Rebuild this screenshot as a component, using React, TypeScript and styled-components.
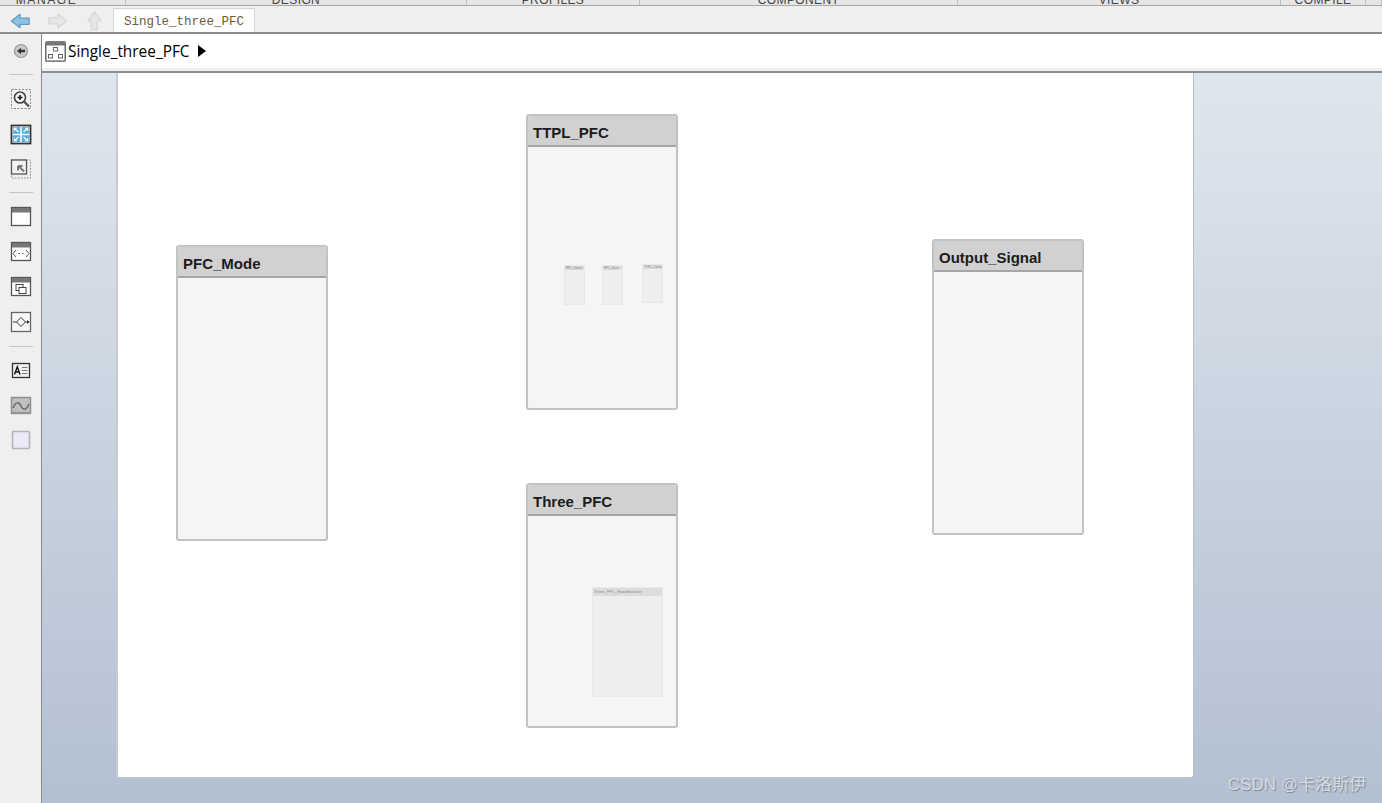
import React from 'react';
import styled, { createGlobalStyle } from 'styled-components';

const GlobalStyle = createGlobalStyle`
  html, body {
    margin: 0;
    padding: 0;
    height: 100%;
    overflow: hidden;
    font-family: "Liberation Sans", Arial, sans-serif;
  }
  #root {
    height: 100%;
  }
`;

const Window = styled.div`
  position: relative;
  display: flex;
  flex-direction: column;
  width: 1382px;
  height: 803px;
  overflow: hidden;
  background: #efefef;
`;

const Ribbon = styled.div`
  display: flex;
  flex: none;
  height: 5px;
  background: #e6e6e6;
  border-bottom: 1px solid #a8a8a8;
  overflow: hidden;
`;

const RibbonSection = styled.div<{ $width: number; $shift?: number; $track?: number }>`
  flex: none;
  box-sizing: border-box;
  width: ${({ $width }) => $width}px;
  height: 5px;
  padding-right: ${({ $shift }) => $shift ?? 0}px;
  border-right: 1px solid #bdbdbd;
  color: #444;
  font-size: 12px;
  line-height: 1px;
  letter-spacing: ${({ $track }) => $track ?? 0.4}px;
  text-align: center;
  overflow: hidden;
`;

const TabBar = styled.div`
  display: flex;
  align-items: flex-end;
  flex: none;
  height: 26px;
  background: #efefef;
  border-bottom: 2px solid #8b8b8b;
`;

const NavButtons = styled.div`
  display: flex;
  align-items: center;
  gap: 16px;
  width: 113px;
  height: 26px;
  padding: 4px 0 0 10px;
  box-sizing: border-box;
`;

const Tab = styled.div`
  box-sizing: border-box;
  width: 142px;
  height: 24px;
  background: #fff;
  border: 1px solid #d4d4d4;
  border-bottom: none;
  color: #6d5a3a;
  font-family: "Liberation Mono", monospace;
  font-size: 12.5px;
  line-height: 26px;
  text-align: center;
`;

const Body = styled.div`
  display: flex;
  flex: 1;
  min-height: 0;
`;

const Palette = styled.div`
  display: flex;
  flex-direction: column;
  align-items: center;
  flex: none;
  box-sizing: border-box;
  width: 42px;
  padding-top: 5px;
  background: #efefef;
  border-right: 1px solid #8b8b8b;
`;

const PaletteSlot = styled.div<{ $gap?: number }>`
  display: flex;
  align-items: center;
  justify-content: center;
  width: 24px;
  height: 24px;
  margin-bottom: ${({ $gap }) => $gap ?? 11}px;
`;

const PaletteDivider = styled.div`
  width: 24px;
  height: 1px;
  margin-bottom: 12px;
  background: #c4c4c4;
`;

const Main = styled.div`
  display: flex;
  flex-direction: column;
  flex: 1;
  min-width: 0;
`;

const Breadcrumb = styled.div`
  display: flex;
  align-items: center;
  flex: none;
  gap: 2px;
  box-sizing: border-box;
  height: 37px;
  padding-left: 3px;
  background: #fff;
  border-bottom: 3px solid #efefef;
`;

const CrumbLabel = styled.span`
  color: #000;
  font-family: "Open Sans", "Noto Sans", sans-serif;
  font-size: 15.4px;
`;

const CrumbArrow = styled.span`
  width: 0;
  height: 0;
  margin-left: 6px;
  border-left: 8px solid #000;
  border-top: 6px solid transparent;
  border-bottom: 6px solid transparent;
`;

const CanvasRule = styled.div`
  flex: none;
  height: 2px;
  background: #8a8e98;
`;

const Canvas = styled.div`
  flex: 1;
  min-height: 0;
  padding-left: 74px;
  background: linear-gradient(#dfe6ed, #b3c0d2);
  overflow: hidden;
`;

const Page = styled.div`
  position: relative;
  box-sizing: border-box;
  width: 1078px;
  height: 705px;
  background: #fff;
  border-left: 2px solid #c8ccd2;
  border-right: 1px solid #bcc1c8;
  border-bottom: 1px solid #bcc1c8;
  border-radius: 0 0 3px 3px;
`;

const Block = styled.div<{ $x: number; $y: number; $h: number }>`
  position: absolute;
  left: ${({ $x }) => $x}px;
  top: ${({ $y }) => $y}px;
  box-sizing: border-box;
  width: 152px;
  height: ${({ $h }) => $h}px;
  background: #f5f5f5;
  border: 2px solid #c2c2c2;
  border-radius: 3px;
`;

const BlockTitle = styled.div`
  box-sizing: border-box;
  height: 31px;
  padding: 8px 0 0 5px;
  background: #d1d1d1;
  border-bottom: 2px solid #a6a6a6;
  border-radius: 2px 2px 0 0;
  color: #1c1c1c;
  font-size: 15px;
  font-weight: 700;
  line-height: 17px;
`;

const MiniBlock = styled.div<{ $x: number; $y: number; $w: number; $h: number }>`
  position: absolute;
  left: ${({ $x }) => $x}px;
  top: ${({ $y }) => $y}px;
  box-sizing: border-box;
  width: ${({ $w }) => $w}px;
  height: ${({ $h }) => $h}px;
  background: #eeeeee;
  border: 1px solid #e9e9e9;
`;

const MiniTitle = styled.div<{ $h: number; $size: number }>`
  height: ${({ $h }) => $h}px;
  padding-left: 1px;
  background: #dcdcdc;
  color: #888;
  font-size: ${({ $size }) => $size}px;
  line-height: ${({ $h }) => $h}px;
  white-space: nowrap;
  overflow: hidden;
`;

const Watermark = styled.div`
  position: absolute;
  right: 16px;
  bottom: 8px;
  color: #d6dbe2;
  font-family: "Liberation Sans", "Noto Sans CJK SC", sans-serif;
  font-size: 17px;
  line-height: 20px;
  text-shadow: 1px 1px 1px #7d8794;
`;

const ribbonSections = [
  { label: 'MANAGE', width: 126, shift: 32, track: 1.6 },
  { label: 'DESIGN', width: 341 },
  { label: 'PROFILES', width: 173 },
  { label: 'COMPONENT', width: 318 },
  { label: 'VIEWS', width: 323 },
  { label: 'COMPILE', width: 85 },
  { label: '', width: 16 },
];

const NavArrow: React.FC<{ rotate?: number; active?: boolean }> = ({ rotate = 0, active }) => (
  <svg width="21" height="20" viewBox="0 0 22 20">
    <path
      d="M1.5 10 L10.5 3 V7 H20 V13.5 H10.5 V17 Z"
      fill={active ? '#8fc0e6' : '#e6e6e6'}
      stroke={active ? '#5b9ac9' : '#d6d6d6'}
      strokeWidth="1.3"
      strokeLinejoin="round"
      transform={`rotate(${rotate} 11 10)`}
    />
  </svg>
);

const Icon: React.FC<{ children: React.ReactNode }> = ({ children }) => (
  <svg width="22" height="22" viewBox="0 0 22 22" fill="none">
    {children}
  </svg>
);

const FrameIcon: React.FC<{ children?: React.ReactNode }> = ({ children }) => (
  <Icon>
    <rect x="1.5" y="1.5" width="19" height="18" fill="#fff" stroke="#555" strokeWidth="1.3" />
    <rect x="2" y="2" width="18" height="4.5" fill="#777" />
    {children}
  </Icon>
);

function App() {
  return (
    <Window>
      <GlobalStyle />
      <Ribbon>
        {ribbonSections.map((section, i) => (
          <RibbonSection key={i} $width={section.width} $shift={section.shift} $track={section.track}>
            {section.label}
          </RibbonSection>
        ))}
      </Ribbon>

      <TabBar>
        <NavButtons>
          <NavArrow active />
          <NavArrow rotate={180} />
          <NavArrow rotate={90} />
        </NavButtons>
        <Tab>Single_three_PFC</Tab>
      </TabBar>

      <Body>
        <Palette>
          <PaletteSlot $gap={11}>
            <svg width="18" height="18" viewBox="0 0 18 18">
              <circle cx="9" cy="9" r="6.5" fill="#c9c9c9" stroke="#999" strokeWidth="1.2" />
              <path d="M5 9 L9 5.8 V7.8 H13 V10.2 H9 V12.2 Z" fill="#333" />
            </svg>
          </PaletteSlot>
          <PaletteDivider />
          <PaletteSlot $gap={12}>
            <Icon>
              <rect x="1.5" y="1.5" width="19" height="19" stroke="#888" strokeDasharray="2 1.5" fill="#f2f2f2" />
              <circle cx="10" cy="9.5" r="5.5" fill="#f6f6f6" stroke="#444" strokeWidth="1.6" />
              <path d="M7.5 9.5 H12.5 M10 7 V12" stroke="#111" strokeWidth="1.5" />
              <path d="M14 13.5 L19 18.5" stroke="#555" strokeWidth="2.4" />
            </Icon>
          </PaletteSlot>
          <PaletteSlot $gap={10}>
            <Icon>
              <rect x="1.5" y="1.5" width="19" height="18" fill="#fff" stroke="#333" strokeWidth="1.8" />
              <rect x="3" y="3" width="7.2" height="6.8" fill="#58ace5" />
              <rect x="11.8" y="3" width="7.2" height="6.8" fill="#58ace5" />
              <rect x="3" y="11.2" width="7.2" height="6.8" fill="#58ace5" />
              <rect x="11.8" y="11.2" width="7.2" height="6.8" fill="#58ace5" />
              <path
                d="M8.5 8 L4.5 4.3 M4.3 7 V4.3 H7 M13.5 8 L17.5 4.3 M15 4.3 H17.7 V7 M8.5 13 L4.5 16.7 M4.3 14 V16.7 H7 M13.5 13 L17.5 16.7 M15 16.7 H17.7 V14"
                stroke="#fff"
                strokeWidth="1.1"
              />
            </Icon>
          </PaletteSlot>
          <PaletteSlot $gap={11}>
            <Icon>
              <rect x="1.5" y="2" width="19" height="18" stroke="#888" strokeDasharray="1.5 1.5" />
              <rect x="1.5" y="2" width="15" height="14" fill="#f2f2f2" stroke="#555" strokeWidth="1.3" />
              <path d="M14 13.5 L8.5 8 M8 8 H12.5 M8 8 V12.5" stroke="#777" strokeWidth="2" />
            </Icon>
          </PaletteSlot>
          <PaletteDivider />
          <PaletteSlot>
            <FrameIcon />
          </PaletteSlot>
          <PaletteSlot>
            <FrameIcon>
              <path d="M6 9 L3 12.5 L6 16 M16 9 L19 12.5 L16 16 M8.5 12.5 H10 M12 12.5 H13.5" stroke="#444" strokeWidth="0.9" />
            </FrameIcon>
          </PaletteSlot>
          <PaletteSlot>
            <FrameIcon>
              <rect x="6" y="8.5" width="7" height="6" fill="#fff" stroke="#444" />
              <rect x="9" y="11.5" width="7" height="6" fill="#fff" stroke="#444" />
            </FrameIcon>
          </PaletteSlot>
          <PaletteSlot $gap={12}>
            <Icon>
              <rect x="1.5" y="1.5" width="19" height="19" fill="#f7f7f7" stroke="#666" strokeWidth="1.3" />
              <path d="M3 11 H6.5 L11 6.5 L15.5 11 H19 M6.5 11 L11 15.5 L15.5 11" stroke="#333" strokeWidth="1" />
              <path d="M17 9 L19.5 11 L17 13 Z" fill="#333" />
            </Icon>
          </PaletteSlot>
          <PaletteDivider />
          <PaletteSlot>
            <Icon>
              <rect x="2.5" y="3.5" width="17" height="14" fill="#f0f0f0" stroke="#333" strokeWidth="1.3" />
              <path d="M4.5 14.5 L7.3 6.8 L10 14.5 M5.5 12 H9" stroke="#111" strokeWidth="1.4" />
              <path d="M12 7.5 H17.5 M12 10.5 H17.5 M12 13.5 H17.5" stroke="#777" strokeWidth="1.1" />
            </Icon>
          </PaletteSlot>
          <PaletteSlot $gap={10}>
            <Icon>
              <rect x="1.5" y="2.5" width="19" height="16" fill="#c0c0c0" stroke="#8c8c8c" strokeWidth="1.4" />
              <path d="M3 13 C6 6, 9 7, 11 11 S16 16, 19 9" stroke="#666" strokeWidth="1.5" />
              <path d="M2.5 17.5 H19.5" stroke="#999" strokeWidth="1.6" />
            </Icon>
          </PaletteSlot>
          <PaletteSlot>
            <Icon>
              <rect x="2.5" y="2.5" width="17" height="17" rx="1" fill="#ebebf8" stroke="#b4b4b8" strokeWidth="1.6" />
            </Icon>
          </PaletteSlot>
        </Palette>

        <Main>
          <Breadcrumb>
            <svg width="21" height="21" viewBox="0 0 21 21" fill="none">
              <rect x="0.8" y="0.8" width="19.4" height="19.4" rx="1" fill="#fff" stroke="#555" strokeWidth="1.3" />
              <rect x="1" y="1" width="19" height="3.5" fill="#777" />
              <rect x="8.5" y="6.5" width="4" height="3.5" stroke="#666" />
              <rect x="3.5" y="13.5" width="4" height="3.5" stroke="#666" />
              <rect x="13.5" y="13.5" width="4" height="3.5" stroke="#666" />
            </svg>
            <CrumbLabel>Single_three_PFC</CrumbLabel>
            <CrumbArrow />
          </Breadcrumb>
          <CanvasRule />

          <Canvas>
            <Page>
              <Block $x={58} $y={172} $h={296}>
                <BlockTitle>PFC_Mode</BlockTitle>
              </Block>

              <Block $x={408} $y={41} $h={296}>
                <BlockTitle>TTPL_PFC</BlockTitle>
                <MiniBlock $x={36} $y={149} $w={21} $h={40}>
                  <MiniTitle $h={4} $size={3}>PFC_Switch</MiniTitle>
                </MiniBlock>
                <MiniBlock $x={74} $y={149} $w={21} $h={40}>
                  <MiniTitle $h={4} $size={3}>PFC_Drive</MiniTitle>
                </MiniBlock>
                <MiniBlock $x={114} $y={148} $w={21} $h={39}>
                  <MiniTitle $h={4} $size={3}>TTPL_Control</MiniTitle>
                </MiniBlock>
              </Block>

              <Block $x={408} $y={410} $h={245}>
                <BlockTitle>Three_PFC</BlockTitle>
                <MiniBlock $x={64} $y={102} $w={71} $h={110}>
                  <MiniTitle $h={8} $size={4}>Three_PFC_StateMachine</MiniTitle>
                </MiniBlock>
              </Block>

              <Block $x={814} $y={166} $h={296}>
                <BlockTitle>Output_Signal</BlockTitle>
              </Block>
            </Page>
          </Canvas>
        </Main>
      </Body>

      <Watermark>CSDN @卡洛斯伊</Watermark>
    </Window>
  );
}

export default App;
